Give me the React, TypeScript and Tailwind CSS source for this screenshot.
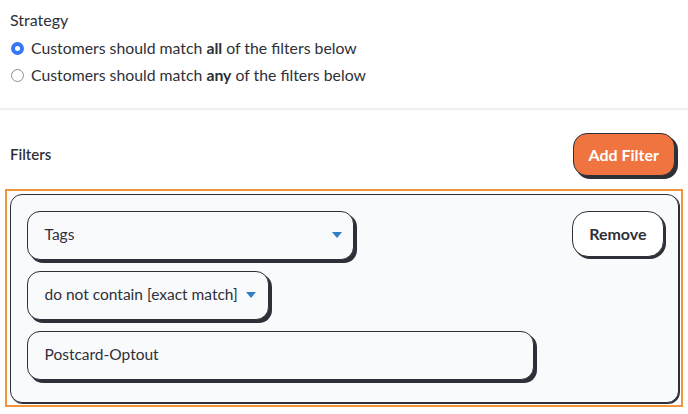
import { useState } from 'react';

const Caret = () => (
  <svg width="10" height="6" viewBox="0 0 10 6" className="shrink-0">
    <path d="M0 0 L10 0 L5 6 Z" fill="#2f7fc1" />
  </svg>
);

function Radio({ checked }: { checked: boolean }) {
  return checked ? (
    <span className="w-[13px] h-[13px] rounded-full bg-[#3478f6] flex items-center justify-center shrink-0">
      <span className="w-[5px] h-[5px] rounded-full bg-white" />
    </span>
  ) : (
    <span className="w-[13px] h-[13px] rounded-full border border-[#8e8e93] bg-white shrink-0" />
  );
}

export default function App() {
  const [strategy, setStrategy] = useState<'all' | 'any'>('all');

  return (
    <div className="w-[688px] h-[414px] bg-white text-[#2e3039] font-['Lato','Open_Sans',sans-serif] overflow-hidden">
      <div className="px-[10px] pt-[11px]">
        <div className="text-[16px] leading-[18px]">Strategy</div>
        <div
          className="flex items-center gap-[7px] mt-[10px] pl-[1px] text-[15.8px] leading-[18px] cursor-pointer"
          onClick={() => setStrategy('all')}
        >
          <Radio checked={strategy === 'all'} />
          <span>
            Customers should match <b className="font-bold">all</b> of the filters below
          </span>
        </div>
        <div
          className="flex items-center gap-[7px] mt-[9px] pl-[1px] text-[15.8px] leading-[18px] cursor-pointer"
          onClick={() => setStrategy('any')}
        >
          <Radio checked={strategy === 'any'} />
          <span>
            Customers should match <b className="font-bold">any</b> of the filters below
          </span>
        </div>
      </div>

      <div className="h-[2px] bg-[#efeff3] mt-[24px]" />

      <div className="flex items-center justify-between pl-[10px] pr-[13px] mt-[23px]">
        <span className="text-[15px] font-semibold">Filters</span>
        <button className="h-[43px] px-[15px] rounded-[14px] bg-[#ef7440] border-[1.5px] border-[#2e3039] shadow-[3px_3px_0_#2e3039] text-white text-[16px] font-bold">
          Add Filter
        </button>
      </div>

      <div className="mt-[13px] ml-[5px] w-[678px] h-[218px] border-[2.5px] border-[#f0963a] p-[2.5px]">
        <div className="h-full rounded-[12px] border-[1.5px] border-[#2e3039] bg-[#f9fafb] shadow-[1px_1px_0_#2e3039] flex justify-between pl-[16px] pr-[14px] pt-[16px]">
          <div className="flex flex-col gap-[11px]">
            <div className="w-[327px] h-[49px] rounded-[13px] border-[1.5px] border-[#2e3039] bg-[#f9fafb] shadow-[3px_3px_0_#2e3039] flex items-center justify-between pl-[17px] pr-[11px] text-[15.5px]">
              <span>Tags</span>
              <Caret />
            </div>
            <div className="w-[242px] h-[49px] rounded-[13px] border-[1.5px] border-[#2e3039] bg-[#f9fafb] shadow-[3px_3px_0_#2e3039] flex items-center gap-[8px] pl-[17px] text-[15.5px]">
              <span>do not contain [exact match]</span>
              <Caret />
            </div>
            <div className="w-[507px] h-[49px] rounded-[13px] border-[1.5px] border-[#2e3039] bg-[#f9fafb] shadow-[3px_3px_0_#2e3039] flex items-center pl-[17px] text-[15.5px]">
              Postcard-Optout
            </div>
          </div>
          <button className="h-[46px] px-[16px] rounded-[16px] border-[1.5px] border-[#2e3039] bg-white shadow-[2px_2px_0_#2e3039] text-[16px] font-bold">
            Remove
          </button>
        </div>
      </div>
    </div>
  );
}
